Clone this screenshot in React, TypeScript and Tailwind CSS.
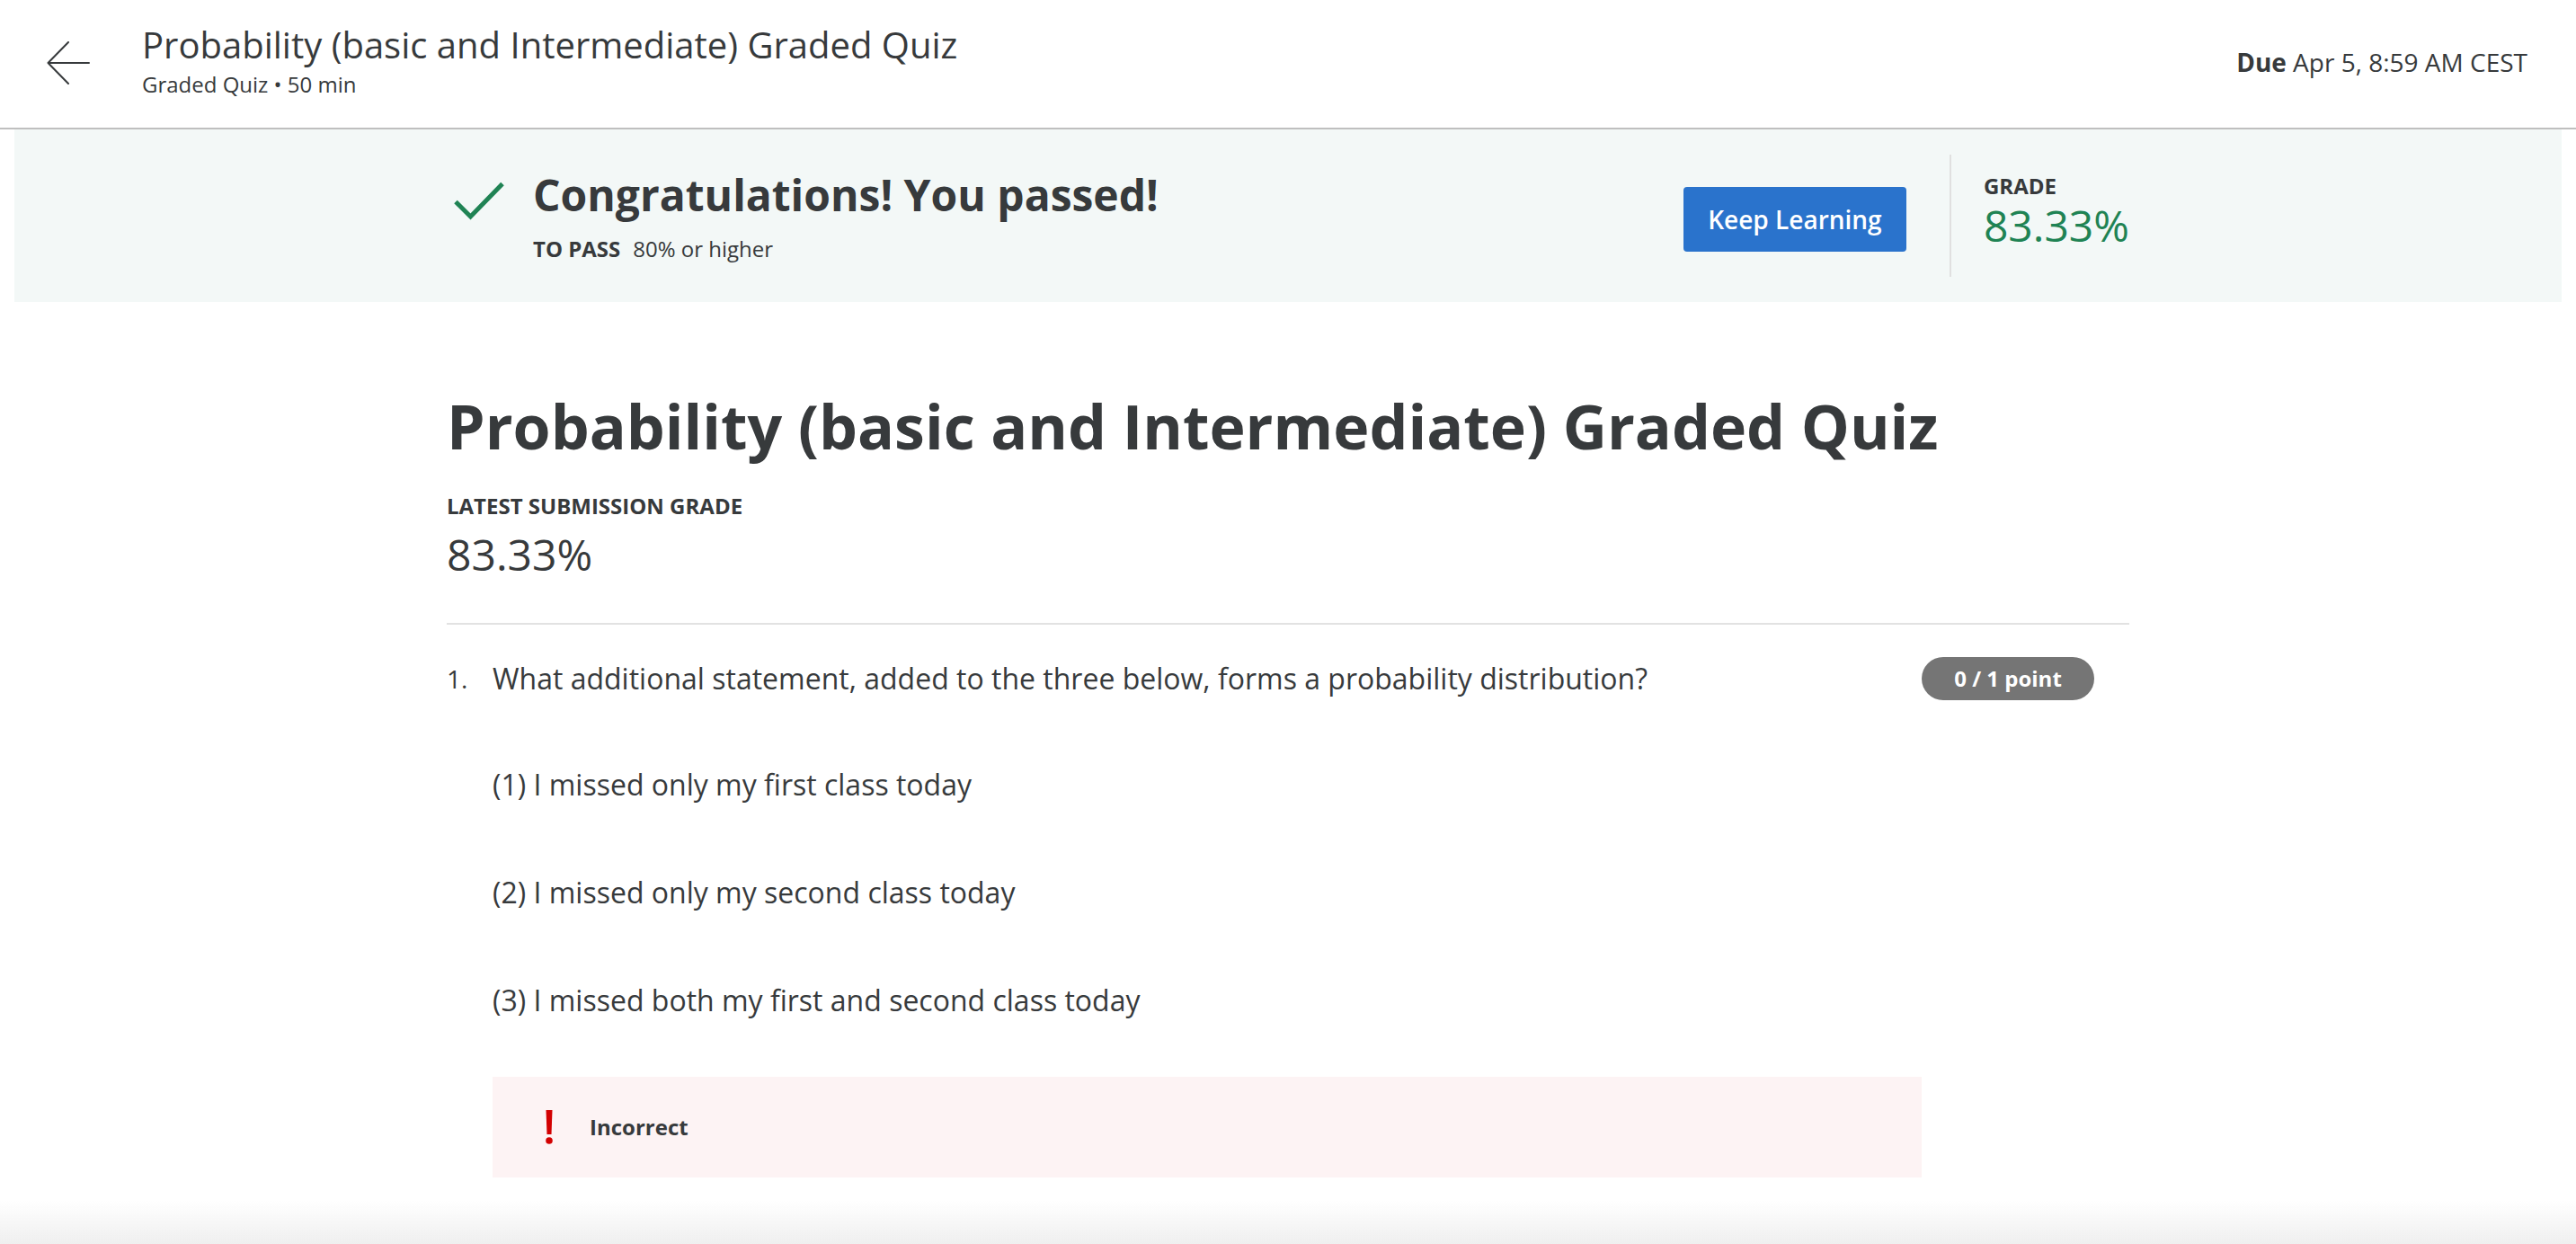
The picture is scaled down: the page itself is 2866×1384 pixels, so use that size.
import React from 'react'

const options = [
  '(1) I missed only my first class today',
  '(2) I missed only my second class today',
  '(3) I missed both my first and second class today',
]

function BackArrow() {
  return (
    <svg width="48" height="48" viewBox="0 0 48 48" className="mt-[22px] shrink-0" fill="none">
      <path d="M47 24H1.5M24 1L1.5 24L24 47" stroke="#373a3c" strokeWidth="2" strokeLinecap="round" strokeLinejoin="round" />
    </svg>
  )
}

function CheckMark() {
  return (
    <svg width="58" height="46" viewBox="0 0 58 46" className="ml-[7px] mt-[13px] shrink-0" fill="none">
      <path d="M3 24.5L19.5 41L55 4.5" stroke="#1f8354" strokeWidth="5" />
    </svg>
  )
}

function AlertMark() {
  return (
    <svg width="8" height="38" viewBox="0 0 8 38" className="shrink-0">
      <path d="M0.5 0H7.5L6.5 27H1.5Z" fill="#d30001" />
      <circle cx="4" cy="34" r="3.8" fill="#d30001" />
    </svg>
  )
}

export default function App() {
  return (
    <div className="min-h-screen bg-white text-[#373a3c] font-['Open_Sans','Noto_Sans',sans-serif]">
      <header className="h-[144px] border-b-2 border-[#bfbfbf] flex items-start pt-6 pl-[52px] pr-[54px]">
        <BackArrow />
        <div className="ml-[58px]">
          <h2 className="text-[40px] leading-[52px]">Probability (basic and Intermediate) Graded Quiz</h2>
          <p className="mt-[2px] text-[24px] leading-[32px]">Graded Quiz • 50 min</p>
        </div>
        <div className="ml-auto mt-[27px] text-[28px] leading-[36px]">
          <span className="font-bold">Due</span> Apr 5, 8:59 AM CEST
        </div>
      </header>

      <section className="mx-4 h-[192px] bg-[#f3f8f7]">
        <div className="mx-auto w-[1872px] h-full flex items-center justify-between">
          <div className="flex items-start">
            <CheckMark />
            <div className="ml-[31px]">
              <h3 className="text-[48px] leading-[60px] font-bold">Congratulations! You passed!</h3>
              <p className="mt-[14px] text-[24px] leading-[32px]">
                <span className="font-bold">TO PASS</span>
                <span className="ml-[14px]">80% or higher</span>
              </p>
            </div>
          </div>
          <div className="flex items-center">
            <button className="mt-2 w-[248px] h-[72px] rounded-[4px] bg-[#2a73cc] text-white text-[28px] font-semibold">
              Keep Learning
            </button>
            <div className="ml-[48px] border-l-2 border-[#e0e0e0] pl-[36px] pt-[19px] pb-[29px]">
              <div className="text-[24px] leading-[32px] font-bold">GRADE</div>
              <div className="text-[48px] leading-[56px] text-[#1f8354]">83.33%</div>
            </div>
          </div>
        </div>
      </section>

      <main className="mx-auto w-[1872px] pt-[96px] pb-24">
        <h1 className="text-[68px] leading-[84px] font-bold">Probability (basic and Intermediate) Graded Quiz</h1>
        <div className="mt-[31px] text-[24px] leading-[32px] font-bold">LATEST SUBMISSION GRADE</div>
        <div className="mt-[10px] text-[48px] leading-[56px]">83.33%</div>
        <div className="mt-[48px] h-[2px] bg-[#e2e2e2]" />

        <div className="pt-[36px] flex items-start">
          <div className="w-[51px] shrink-0 text-[28px] leading-[48px]">1.</div>
          <div className="flex-1">
            <p className="text-[32px] leading-[48px]">
              What additional statement, added to the three below, forms a probability distribution?
            </p>
            {options.map((o, i) => (
              <p key={o} className={`${i === 0 ? 'mt-[70px]' : 'mt-[72px]'} text-[32px] leading-[48px]`}>
                {o}
              </p>
            ))}
            <div className="mt-[61px] h-[112px] bg-[#fdf3f4] flex items-center pl-[59px]">
              <AlertMark />
              <span className="ml-[41px] text-[24px] leading-[32px] font-bold">Incorrect</span>
            </div>
          </div>
          <div className="w-[231px] shrink-0">
            <span className="flex h-[48px] w-[192px] items-center justify-center rounded-full bg-[#757575] text-white text-[24px] font-bold">
              0 / 1 point
            </span>
          </div>
        </div>
      </main>

      <div className="fixed bottom-0 inset-x-0 h-[48px] pointer-events-none bg-linear-to-t from-[#efefef] to-transparent" />
    </div>
  )
}
